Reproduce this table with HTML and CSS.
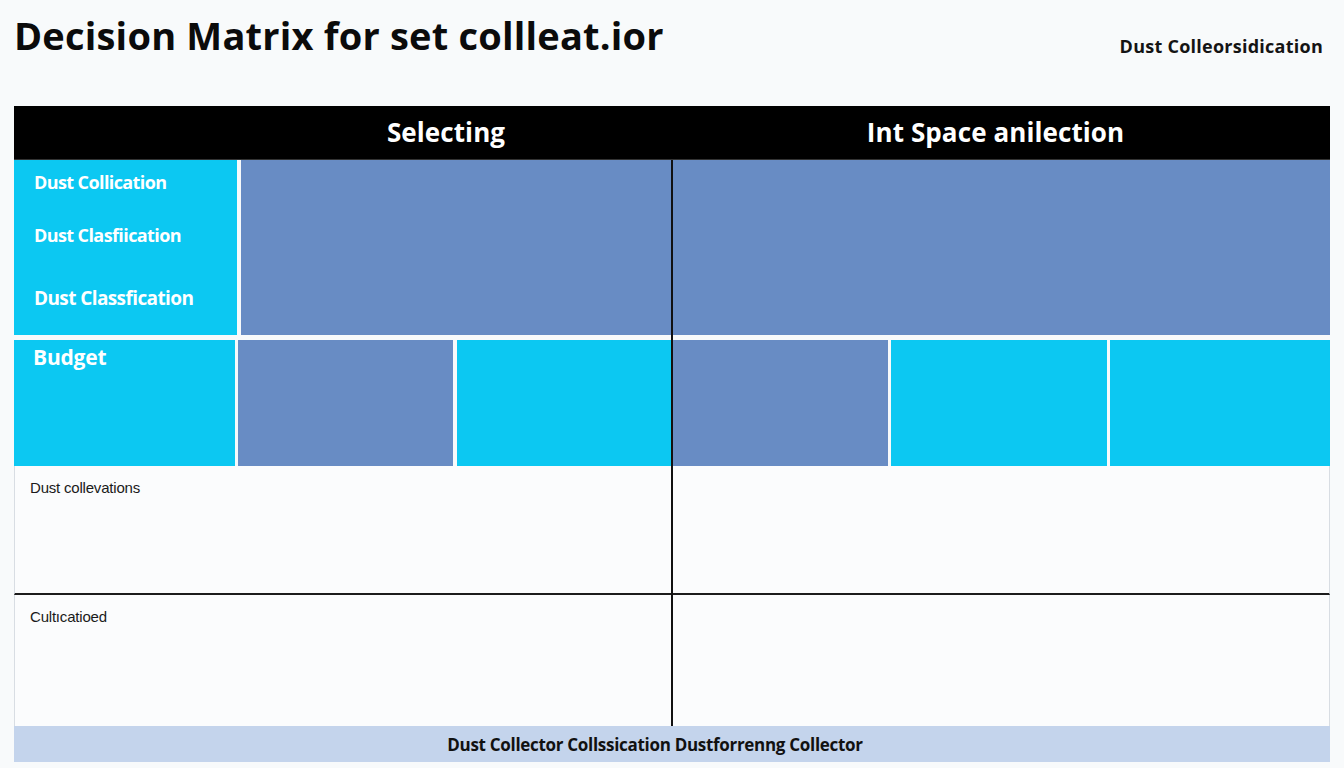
FILE: index.html
```
<!DOCTYPE html>
<html lang="en">
<head>
<meta charset="utf-8">
<title>Decision Matrix</title>
<link rel="stylesheet" href="styles.css">
</head>
<body>
<div class="page">
  <header class="top">
    <h1 class="title">Decision Matrix for set collleat.ior</h1>
    <div class="top-note">Dust Colleorsidication</div>
  </header>

  <section class="matrix">
    <div class="thead">
      <div class="th-spacer"></div>
      <div class="th th-left">Selecting</div>
      <div class="th th-right">Int Space anilection</div>
    </div>

    <div class="row row-criteria">
      <div class="cell cyan labels">
        <div class="lbl l1">Dust Collication</div>
        <div class="lbl l2">Dust Clasfiication</div>
        <div class="lbl l3">Dust Classfication</div>
      </div>
      <div class="cell blue wide"></div>
    </div>

    <div class="row row-budget">
      <div class="half half-left">
        <div class="cell cyan c-a"><span class="budget">Budget</span></div>
        <div class="cell blue c-b"></div>
        <div class="cell cyan c-c"></div>
      </div>
      <div class="half half-right">
        <div class="cell blue c-d"></div>
        <div class="cell cyan c-e"></div>
        <div class="cell cyan c-f"></div>
      </div>
    </div>

    <div class="row row-plain first">
      <div class="plain-text">Dust collevations</div>
    </div>
    <div class="row row-plain second">
      <div class="plain-text">Cultıcatioed</div>
    </div>

    <footer class="foot">Dust Collector Collssication Dustforrenng Collector</footer>

    <div class="divider"></div>
  </section>
</div>
</body>
</html>
```

FILE: styles.css
```
html, body {
  margin: 0;
  padding: 0;
}
body {
  background: #f8fafb;
  font-family: "Open Sans", "Noto Sans", sans-serif;
  color: #111;
  width: 1344px;
  height: 768px;
  overflow: hidden;
}
.page {
  padding: 0 14px;
}
.top {
  height: 106px;
  display: flex;
  justify-content: space-between;
  align-items: flex-start;
}
.title {
  margin: 0;
  padding-top: 16px;
  font-size: 38px;
  line-height: 1;
  font-weight: 700;
  letter-spacing: 0.2px;
  color: #0b0b0b;
}
.top-note {
  padding-top: 37px;
  padding-right: 7px;
  font-size: 18px;
  line-height: 1;
  font-weight: 700;
  letter-spacing: 0.25px;
  color: #141414;
}
.matrix {
  position: relative;
  width: 1316px;
}
.thead {
  display: flex;
  height: 54px;
  background: #000;
  color: #fff;
  border-bottom: 1px solid #333;
  box-sizing: border-box;
}
.th-spacer {
  width: 223px;
}
.th {
  display: flex;
  align-items: center;
  justify-content: center;
  font-size: 26px;
  font-weight: 700;
  letter-spacing: 0.1px;
  padding-bottom: 2px;
  box-sizing: border-box;
}
.th-left {
  width: 434px;
  padding-right: 16px;
}
.th-right {
  width: 659px;
  padding-right: 10px;
}
.row {
  display: flex;
}
.cell.cyan {
  background: #0cc8f2;
}
.cell.blue {
  background: #688cc4;
}
.row-criteria {
  height: 175px;
  gap: 4px;
}
.labels {
  width: 223px;
  box-sizing: border-box;
  padding: 10px 0 0 20px;
  color: #fff;
  font-weight: 700;
  font-size: 18px;
  line-height: 24px;
  letter-spacing: -0.6px;
}
.l2 { margin-top: 29px; }
.l3 {
  margin-top: 39px;
  font-size: 19px;
  letter-spacing: -0.6px;
}
.wide {
  flex: 1;
}
.row-budget {
  margin-top: 5px;
  height: 126px;
}
.half {
  display: flex;
  gap: 3px;
}
.half-left { width: 657px; }
.half-right { width: 659px; }
.c-a { width: 221px; }
.c-b { width: 215px; margin-right: 1px; }
.c-c { width: 214px; }
.c-d { width: 217px; }
.c-e { width: 216px; }
.c-f { width: 220px; }
.budget {
  display: block;
  padding: 7px 0 0 19px;
  color: #fff;
  font-size: 21px;
  line-height: 1;
  font-weight: 700;
  letter-spacing: -0.2px;
}
.row-plain {
  background: #fbfcfd;
  border-left: 1px solid #d8dde3;
  border-right: 1px solid #d8dde3;
  box-sizing: border-box;
}
.row-plain.first {
  height: 129px;
  border-bottom: 2px solid #1c1c1c;
}
.row-plain.second {
  height: 131px;
}
.plain-text {
  padding: 13px 0 0 15px;
  font-family: "Liberation Sans", Arial, sans-serif;
  font-size: 15px;
  line-height: 17px;
  letter-spacing: -0.2px;
  color: #1a1a1a;
}
.foot {
  height: 36px;
  background: #c4d4ec;
  display: flex;
  align-items: center;
  justify-content: center;
  padding-right: 34px;
  font-size: 17px;
  font-weight: 700;
  letter-spacing: -0.3px;
  color: #111;
}
.divider {
  position: absolute;
  left: 657px;
  top: 54px;
  bottom: 36px;
  width: 2px;
  background: #111;
}
```
